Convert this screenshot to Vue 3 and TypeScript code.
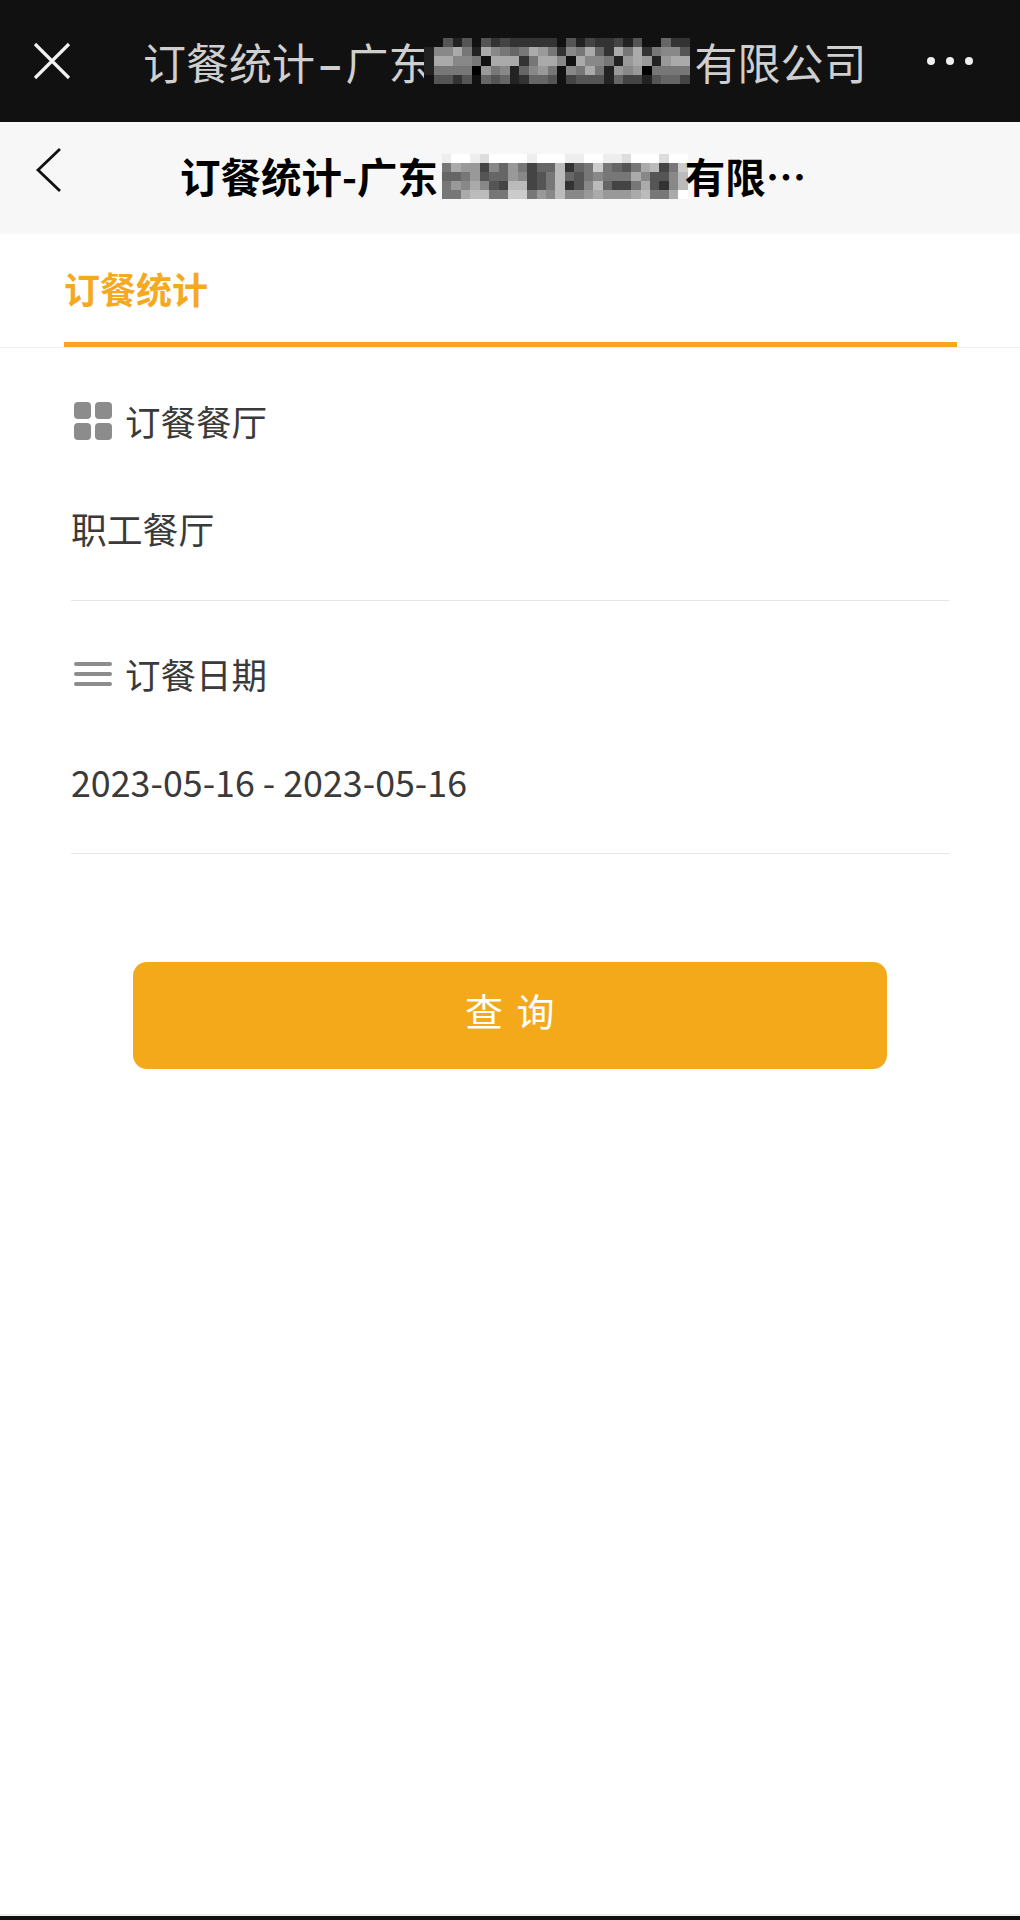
<script setup lang="ts">
const toCells = (rows: string[]): string[] =>
  rows.flatMap((r) => r.split('').map((c) => `#${c}${c}${c}${c}${c}${c}`));

const topCells = toCells([
  '1152515343333315243342511633',
  '288a72a8767a97387a63a7a37885',
  '2aa8871aaa37aa81a88729a929aa',
  '27777097826897187a7298907777',
  '1553516562366514555264425664',
]);

const navCells = toCells([
  'effedffffefffeeffeedfffdff',
  '7a9948697466b367c7657ab47c',
  '667956698457b6578777a8558b',
  '798a854bb457b358b6447a538b',
  '77abb77cc798b889a999ab77af',
]);
</script>

<template>
  <div class="page">
    <header class="topbar">
      <svg class="close" width="38" height="38" viewBox="0 0 38 38" aria-hidden="true">
        <path d="M2 2 L36 36 M36 2 L2 36" stroke="#f2f2f2" stroke-width="3.2" fill="none" />
      </svg>
      <div class="top-title">
        <span>订餐统计<span class="dash">–</span>广东</span>
        <span class="mosaic mosaic-top">
          <i v-for="(c, i) in topCells" :key="i" :style="{ background: c }"></i>
        </span>
        <span>有限公司</span>
      </div>
      <div class="dots"><i></i><i></i><i></i></div>
    </header>

    <nav class="navbar">
      <svg class="back" width="28" height="46" viewBox="0 0 28 46" aria-hidden="true">
        <path d="M25 2 L3 23 L25 44" stroke="#111" stroke-width="2.8" fill="none" />
      </svg>
      <div class="nav-title">
        <span>订餐统计-广东</span>
        <span class="mosaic mosaic-nav">
          <i v-for="(c, i) in navCells" :key="i" :style="{ background: c }"></i>
        </span>
        <span class="nav-tail">有限…</span>
      </div>
    </nav>

    <div class="tabs">
      <div class="tab">订餐统计</div>
    </div>

    <main class="form">
      <section class="field">
        <div class="label">
          <span class="icon-grid"><i></i><i></i><i></i><i></i></span>
          <span>订餐餐厅</span>
        </div>
        <div class="value">职工餐厅</div>
      </section>
      <section class="field">
        <div class="label">
          <span class="icon-lines"><i></i><i></i><i></i></span>
          <span>订餐日期</span>
        </div>
        <div class="value">2023-05-16 - 2023-05-16</div>
      </section>
      <button class="query" type="button">查 询</button>
    </main>

    <div class="spacer"></div>
    <div class="bottom-edge"></div>
  </div>
</template>

<style>
html,
body {
  margin: 0;
  background: #fff;
}
</style>

<style scoped>
.page {
  width: 1020px;
  height: 1920px;
  display: flex;
  flex-direction: column;
  font-family: "Noto Sans CJK SC", "Noto Sans", sans-serif;
  overflow: hidden;
  background: #fff;
}
.topbar {
  height: 122px;
  flex: none;
  background: #111;
  display: flex;
  align-items: center;
  padding: 0 47px 0 33px;
  box-sizing: border-box;
}
.close {
  flex: none;
}
.top-title {
  flex: 1;
  margin-left: 72px;
  display: flex;
  align-items: center;
  color: #cfcfcf;
  font-size: 43px;
  line-height: 60px;
  white-space: nowrap;
}
.dash {
  font-weight: 700;
  margin: 0 3.5px;
}
.mosaic {
  display: inline-grid;
  flex: none;
}
.mosaic i {
  display: block;
}
.mosaic-top {
  grid-template-columns: repeat(28, 9.47px);
  grid-auto-rows: 9.4px;
  margin: 0 5px 0 -7px;
}
.mosaic-nav {
  grid-template-columns: repeat(26, 9.46px);
  grid-auto-rows: 9px;
  margin: 0 0 0 4px;
}
.nav-tail {
  margin-left: -3px;
}
.dots {
  display: flex;
  gap: 11px;
  flex: none;
}
.dots i {
  display: block;
  width: 8px;
  height: 8px;
  border-radius: 50%;
  background: #f0f0f0;
}
.navbar {
  height: 112px;
  flex: none;
  background: #f7f7f7;
  display: flex;
  align-items: center;
  padding: 0 0 0 35px;
  box-sizing: border-box;
}
.back {
  flex: none;
  margin-bottom: 16px;
}
.nav-title {
  margin-left: 117px;
  margin-bottom: 4px;
  display: flex;
  align-items: center;
  color: #000;
  font-size: 40.5px;
  font-weight: 700;
  line-height: 56px;
  white-space: nowrap;
}
.tabs {
  height: 114px;
  flex: none;
  box-sizing: border-box;
  padding: 0 63px 0 64px;
  border-bottom: 1px solid #f0f0f0;
}
.tab {
  height: 113px;
  box-sizing: border-box;
  border-bottom: 5px solid #f5a623;
  padding: 28px 0 0;
  color: #f5a91f;
  font-size: 36px;
  font-weight: 700;
  line-height: 52px;
}
.form {
  flex: none;
  padding: 0 71px;
}
.field {
  border-bottom: 1px solid #e6e6e6;
  height: 253px;
  box-sizing: border-box;
  padding-top: 47px;
}
.label {
  display: flex;
  align-items: center;
  height: 52px;
  color: #3a3a3a;
  font-size: 35.5px;
  line-height: 52px;
}
.label span:last-child {
  margin-left: 13px;
}
.icon-grid {
  width: 38px;
  height: 38px;
  margin: 0 0 0 3px;
  display: grid;
  grid-template-columns: 17px 17px;
  grid-template-rows: 17px 17px;
  gap: 4px;
}
.icon-grid i {
  display: block;
  background: #8c8c8c;
  border-radius: 4px;
}
.icon-lines {
  width: 38px;
  height: 24px;
  margin: 0 0 0 3px;
  display: flex;
  flex-direction: column;
  justify-content: space-between;
}
.icon-lines i {
  display: block;
  height: 4px;
  background: #8c8c8c;
  border-radius: 2px;
}
.value {
  margin-top: 55px;
  height: 52px;
  color: #3a3a3a;
  font-size: 35.8px;
  line-height: 52px;
}
.query {
  display: block;
  margin: 108px auto 0;
  width: 754px;
  height: 107px;
  background: #f4a91b;
  border: 0;
  border-radius: 14px;
  color: #fff;
  font-family: inherit;
  font-size: 38px;
  line-height: 52px;
  letter-spacing: 2.5px;
  padding: 0 0 11px 2px;
}
.spacer {
  flex: 1;
}
.bottom-edge {
  height: 6px;
  flex: none;
  box-sizing: border-box;
  border-top: 2px solid #eee;
  background: #111;
}
</style>
